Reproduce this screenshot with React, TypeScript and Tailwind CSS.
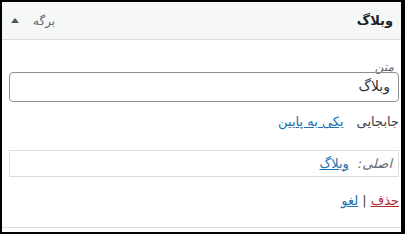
import React from "react";

export default function App() {
  const fa = { fontFamily: '"DejaVu Sans", sans-serif' };
  return (
    <div className="w-[405px] h-[234px] bg-black pt-[2px] pl-[2px] pr-[4px] pb-[2px]" style={fa}>
      <div dir="rtl" className="w-full h-full bg-white flex flex-col">
        <div className="h-[38px] bg-[#f6f7f7] border-b border-[#dcdcde] flex items-center justify-between pr-[8px] pl-[9px] shrink-0">
          <span className="text-[13px] font-bold text-[#1d2327] leading-none">وبلاگ</span>
          <div className="flex items-center gap-[14px]">
            <span className="text-[12px] text-[#646970] leading-none">برگه</span>
            <svg width="8" height="5" viewBox="0 0 8 5">
              <polygon points="4,0 8,5 0,5" fill="#50575e" />
            </svg>
          </div>
        </div>
        <div className="pl-[7px] pr-[2px] pt-[22px] flex flex-col">
          <div className="h-[10px] text-[12px] italic text-[#646970] leading-[10px] pr-[5px]">متن</div>
          <div className="h-[30px] border border-[#8c8f94] rounded-[4px] flex items-center pr-[8px] pb-[2px] text-[14px] text-[#2c3338]">
            وبلاگ
          </div>
          <div className="mt-[12px] h-[16px] text-[13px] leading-[16px] text-[#3c434a] flex">
            <span>جابجایی</span>
            <a className="mr-[13px] text-[#2271b1] underline">یکی به پایین</a>
          </div>
          <div className="mt-[20px] h-[27px] border border-[#dcdcde] flex items-center pr-[6px] text-[13px]">
            <span className="italic text-[#646970]">اصلی:</span>
            <a className="mr-[9px] text-[#2271b1] underline">وبلاگ</a>
          </div>
          <div className="mt-[16px] h-[16px] text-[13px] leading-[16px] flex items-center">
            <a className="text-[#b32d2e] underline">حذف</a>
            <span className="mx-[4px] text-[#3c434a]">|</span>
            <a className="text-[#2271b1] underline">لغو</a>
          </div>
        </div>
        <div className="mt-auto mb-[4px] border-b border-[#dcdcde]" />
      </div>
    </div>
  );
}
